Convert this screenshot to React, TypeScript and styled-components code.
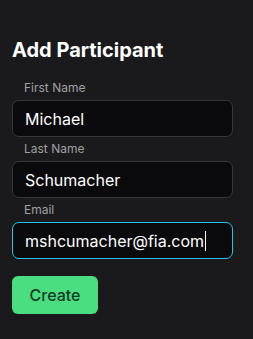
import React from "react";
import styled, { createGlobalStyle } from "styled-components";

const Global = createGlobalStyle`
  html, body { margin: 0; padding: 0; background: #1a1a1c; }
  body { font-family: Inter, "Noto Sans", sans-serif; -webkit-font-smoothing: antialiased; }
  * { box-sizing: border-box; }
`;

const Page = styled.div`
  width: 253px;
  height: 339px;
  background: #1a1a1c;
  padding: 38px 20px 0 12px;
  display: flex;
  flex-direction: column;
`;

const Title = styled.h2`
  margin: 0;
  font-size: 20px;
  line-height: 24px;
  font-weight: 700;
  color: #ffffff;
  letter-spacing: 0;
`;

const Form = styled.form`
  display: flex;
  flex-direction: column;
  margin-top: 14px;
`;

const Label = styled.label`
  display: block;
  padding-left: 12px;
  margin: 4px 0 4px;
  font-size: 12px;
  line-height: 16px;
  color: #a0a0a4;
`;

const Field = styled.div`
  position: relative;
  width: 221px;
`;

const Input = styled.input<{ $focused?: boolean }>`
  display: block;
  width: 221px;
  height: 37px;
  padding: 0 12px;
  border-radius: 7px;
  border: 1px solid ${(p) => (p.$focused ? "#22c5e8" : "#37373b")};
  background: #0a0a0c;
  color: #ffffff;
  font-family: inherit;
  font-size: 16px;
  outline: none;
  caret-color: transparent;
`;

const Caret = styled.span`
  position: absolute;
  left: 193px;
  top: 9px;
  width: 1px;
  height: 20px;
  background: #ffffff;
  pointer-events: none;
`;

const Button = styled.button`
  margin-top: 17px;
  width: 86px;
  height: 38px;
  border: none;
  border-radius: 6px;
  background: #4ade80;
  color: #143a22;
  font-family: inherit;
  font-size: 16px;
  font-weight: 500;
  cursor: pointer;
`;

export default function App() {
  return (
    <>
      <Global />
      <Page>
        <Title>Add Participant</Title>
        <Form onSubmit={(e) => e.preventDefault()}>
          <Label>First Name</Label>
          <Field>
            <Input defaultValue="Michael" />
          </Field>
          <Label>Last Name</Label>
          <Field>
            <Input defaultValue="Schumacher" />
          </Field>
          <Label>Email</Label>
          <Field>
            <Input $focused defaultValue="mshcumacher@fia.com" />
            <Caret />
          </Field>
          <div>
            <Button type="submit">Create</Button>
          </div>
        </Form>
      </Page>
    </>
  );
}
